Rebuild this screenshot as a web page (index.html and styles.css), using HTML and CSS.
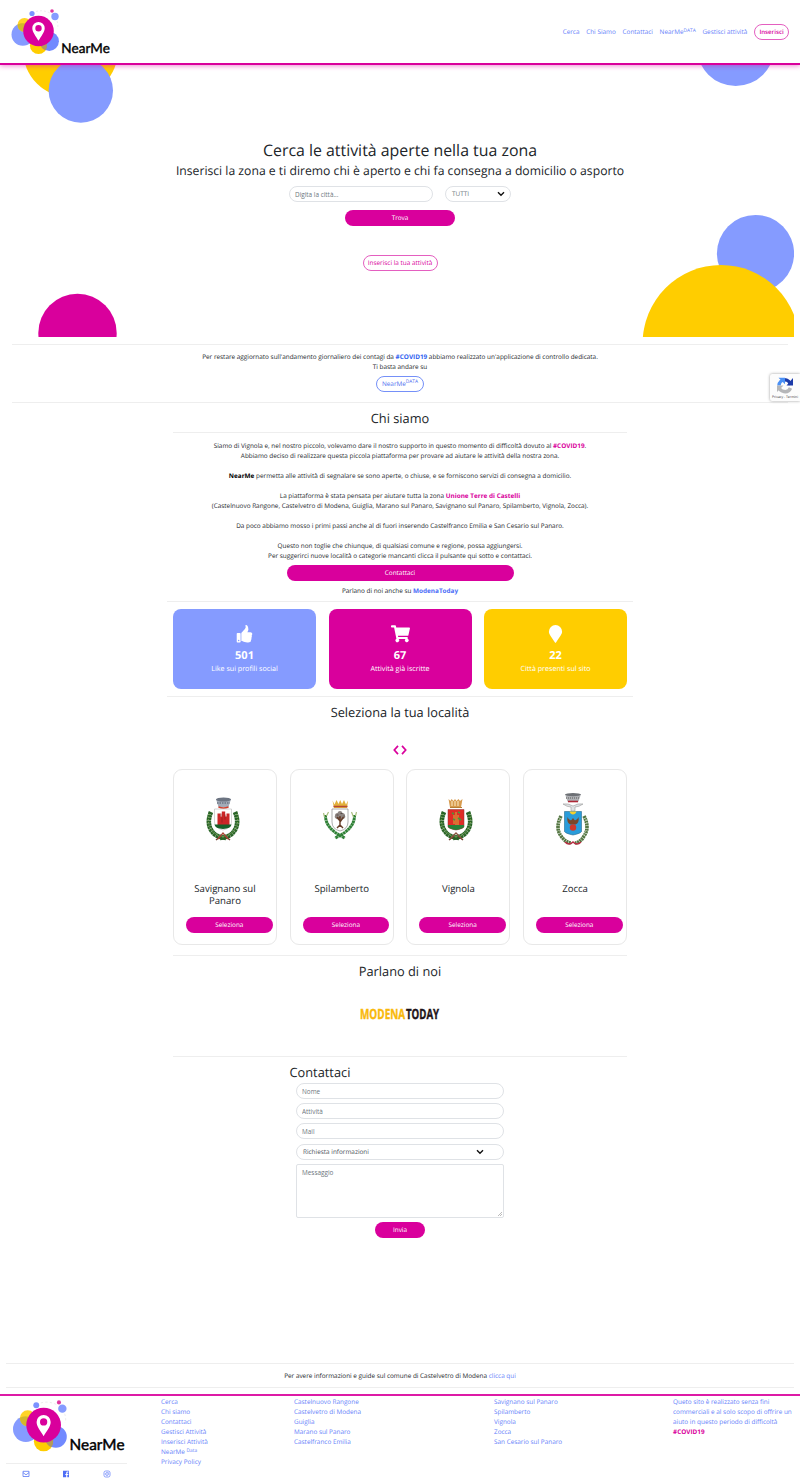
FILE: index.html
```html
<!DOCTYPE html>
<html lang="it">
<head>
<meta charset="utf-8">
<title>NearMe</title>
<link rel="stylesheet" href="styles.css">
</head>
<body>
<svg class="defs" width="0" height="0">
  <symbol id="logo" viewBox="8 8 108 52">
    <path d="M36 11.500q7-2 14 1.500M57 21q1.500 4 .5 8" fill="none" stroke="#ddd" stroke-width=".5" stroke-dasharray="2 2"/>
    <circle cx="22.800" cy="34.500" r="11.300" fill="#859bff"/>
    <circle cx="24.500" cy="25" r="7" fill="#ffcd00" fill-opacity=".85"/>
    <path d="M17.800 24.500a11.300 11.300 0 0 1 10 .2v6.400a7 7 0 0 1-10-6.600z" fill="#c9b12e" fill-opacity=".75"/>
    <circle cx="38.500" cy="45.500" r="8.600" fill="#ffcd00"/>
    <circle cx="49.300" cy="41.300" r="9.600" fill="#7189ff"/>
    <path d="M41 37h5.800v10.500a8.600 8.600 0 0 1-1.500 3a9.600 9.600 0 0 1-4.300-13.500z" fill="#b39a59"/>
    <circle cx="38.500" cy="31" r="15.300" fill="#d9009c"/>
    <circle cx="32" cy="13.500" r="2.600" fill="#7b92ff"/>
    <circle cx="55" cy="16.500" r="3.700" fill="#859bff"/>
    <circle cx="52" cy="11" r="1.800" fill="#e0379f"/>
    <path fill-rule="evenodd" d="M38.500 22a6.200 6.200 0 0 1 6.200 6.200c0 4-3.700 8-6.200 12.600c-2.500-4.600-6.200-8.600-6.200-12.600a6.200 6.200 0 0 1 6.200-6.200zm0 3a3.200 3.200 0 1 0 0 6.400a3.200 3.200 0 0 0 0-6.400z" fill="#fff"/>
    <text x="61.300" y="53" class="logo-text" textLength="48.500" lengthAdjust="spacing">NearMe</text>
  </symbol>
  <symbol id="wreath" viewBox="0 0 34 42">
    <path d="M5 13Q0 25 6.500 33Q10 38 20 39M29 13Q34 25 27.500 33Q24 38 14 39" fill="none" stroke="#286326" stroke-width="4.600" stroke-dasharray="2.600 .3"/>
    <path d="M3.500 15Q0 25 7 33Q11 37 18 38M30.500 15Q34 25 27 33Q23 37 16 38" fill="none" stroke="#76a34f" stroke-width="1.300" stroke-dasharray="1 1.700"/>
    <path d="M10 41l5-4M24 41l-5-4" stroke="#70402e" stroke-width="1.500"/>
  </symbol>
</svg>

<header class="topbar">
  <svg class="topbar-logo"><use href="#logo"/></svg>
  <nav class="nav">
    <a>Cerca</a><a>Chi Siamo</a><a>Contattaci</a><a>NearMe<sup>DATA</sup></a><a>Gestisci attività</a>
    <a class="btn-outline nav-btn">Inserisci</a>
  </nav>
</header>

<section class="hero">
  <svg class="hero-bg" viewBox="0 65 794 272">
    <circle cx="70.500" cy="50" r="47.500" fill="#ffcd00"/>
    <circle cx="80.800" cy="90.500" r="32.200" fill="#859bff"/>
    <circle cx="735.700" cy="47.300" r="38.700" fill="#859bff"/>
    <circle cx="755.500" cy="253.500" r="38.600" fill="#859bff"/>
    <circle cx="721" cy="343.500" r="78.400" fill="#ffcd00"/>
    <circle cx="77.500" cy="333" r="39.200" fill="#d9009c"/>
  </svg>
  <h1>Cerca le attività aperte nella tua zona</h1>
  <h2>Inserisci la zona e ti diremo chi è aperto e chi fa consegna a domicilio o asporto</h2>
  <div class="search">
    <input class="field city" placeholder="Digita la città...">
    <div class="field category"><span>TUTTI</span><svg class="chev" viewBox="0 0 8 6"><path d="M1 1.300l3 3l3-3"/></svg></div>
  </div>
  <a class="btn trova">Trova</a>
  <a class="btn-outline add">Inserisci la tua attività</a>
</section>

<section class="data">
  <p>Per restare aggiornato sull'andamento giornaliero dei contagi da <b class="blue">#COVID19</b> abbiamo realizzato un'applicazione di controllo dedicata.</p>
  <p>Ti basta andare su</p>
  <a class="btn-outline btn-blue">NearMe<sup>DATA</sup></a>
</section>

<main>
  <section class="about">
    <h3>Chi siamo</h3>
    <div class="about-text">
      <p>Siamo di Vignola e, nel nostro piccolo, volevamo dare il nostro supporto in questo momento di difficoltà dovuto al <b class="pink">#COVID19</b>.</p>
      <p>Abbiamo deciso di realizzare questa piccola piattaforma per provare ad aiutare le attività della nostra zona.</p>
      <br>
      <p><b class="black">NearMe</b> permetta alle attività di segnalare se sono aperte, o chiuse, e se forniscono servizi di consegna a domicilio.</p>
      <br>
      <p>La piattaforma è stata pensata per aiutare tutta la zona <b class="pink">Unione Terre di Castelli</b></p>
      <p>(Castelnuovo Rangone, Castelvetro di Modena, Guiglia, Marano sul Panaro, Savignano sul Panaro, Spilamberto, Vignola, Zocca).</p>
      <br>
      <p>Da poco abbiamo mosso i primi passi anche al di fuori inserendo Castelfranco Emilia e San Cesario sul Panaro.</p>
      <br>
      <p>Questo non toglie che chiunque, di qualsiasi comune e regione, possa aggiungersi.</p>
      <p>Per suggerirci nuove località o categorie mancanti clicca il pulsante qui sotto e contattaci.</p>
    </div>
    <a class="btn contact-btn">Contattaci</a>
    <p class="press">Parlano di noi anche su <b class="blue2">ModenaToday</b></p>
  </section>

  <section class="stats">
    <div class="stat s-blue">
      <svg viewBox="0 -64 512 576"><path fill-rule="evenodd" d="M104 200H24c-13 0-24 11-24 24v264c0 13 11 24 24 24h80c13 0 24-11 24-24V224c0-13-11-24-24-24zM64 472a24 24 0 1 1 0-48a24 24 0 0 1 0 48zM384 81.500c0 42.400-26 66.200-33.300 94.500h101.700c33.400 0 59.400 27.700 59.600 58.100c.1 18-7.600 37.300-19.500 49.300c9.800 23.400 8.200 56.200-9.400 79.700c8.700 25.900-.1 57.700-16.400 74.800c4.300 17.600 2.200 32.600-6.100 44.600C440.200 511.600 389.600 512 346.800 512c-60.300 0-109.600-22-149.200-39.600c-19.900-8.900-25.900-9.800-45.700-10.200V203c0-4 1.600-7.900 4.500-10.700c49.500-48.900 70.800-80.700 111.300-121.300c18.500-18.500 25.200-46.500 31.700-73.600C270.200-25.700 281.700-64 306.600-64c38 0 72 32.700 77.400 145.500z"/></svg>
      <strong>501</strong><span>Like sui profili social</span>
    </div>
    <div class="stat s-pink">
      <svg viewBox="0 0 576 512"><path d="M528 301l47-208c4-15-8-29-23-29H159l-9-45C148 8 138 0 126 0H24C11 0 0 11 0 24v16c0 13 11 24 24 24h70l70 343a56 56 0 1 0 67 9h210a56 56 0 1 0 63-10l6-25c3-15-8-29-24-29H218l-7-32h294c11 0 21-8 23-19z"/></svg>
      <strong>67</strong><span>Attività già iscritte</span>
    </div>
    <div class="stat s-yellow">
      <svg viewBox="0 0 384 512"><path d="M172 502C27 291 0 270 0 192a192 192 0 0 1 384 0c0 78-27 99-172 310a24 24 0 0 1-40 0z"/></svg>
      <strong>22</strong><span>Città presenti sul sito</span>
    </div>
  </section>

  <section class="places">
    <h3>Seleziona la tua località</h3>
    <svg class="arrows" viewBox="0 0 14 10"><path d="M5 .9L1.300 5L5 9.100M9 .9L12.700 5L9 9.100"/></svg>
    <div class="cards">
      <div class="card">
        <svg class="crest" viewBox="0 0 34 56">
          <use href="#wreath" y="8" width="34" height="42"/>
          <path d="M10 8h15l-2.500 8h-10z" fill="#a3abb8"/><ellipse cx="17.500" cy="8.500" rx="7.500" ry="2" fill="#6c7482"/><path d="M11 12h13" stroke="#6e7784" stroke-width="1.500" stroke-dasharray="1.500 1"/><path d="M12.500 16q5 2 10 0" stroke="#d03f2d" stroke-width="1.600" fill="none"/>
          <path d="M8.500 18h17v13q0 6-8.500 8q-8.500-2-8.500-8z" fill="#fff" stroke="#aaa" stroke-width=".5"/>
          <path d="M11.500 22.500h3v3h1.300v-5h3.400v5h1.300v-3h3V34h-12z" fill="#cb2527"/><path d="M15 22.500v3m4-2v5m-3-2v5" stroke="#892020" stroke-width=".7"/><path d="M8.500 33.500h17q-.5 4-8.500 4.500q-8-.5-8.500-4.500z" fill="#17602a"/><path d="M12 48l5-6l5 6" stroke="#a64532" fill="none" stroke-width="1.300"/>
        </svg>
        <h4>Savignano sul<br>Panaro</h4><a class="btn">Seleziona</a>
      </div>
      <div class="card">
        <svg class="crest" viewBox="0 0 34 56">
          <path d="M2.500 24Q2 38 22 47M31.500 24Q32 38 12 47" fill="none" stroke="#2f8136" stroke-width="3" stroke-dasharray="2.500 .4"/><path d="M1.500 26l-1-4M3.500 25l2-4M32.500 25l1-4M30.500 26l-2-5" stroke="#a8bd7d" stroke-width="1.200"/>
          <path d="M9.500 9.500l2 4l2-4.500l2 4l1.700-4l1.800 4l2-4l2 4.500l2-4l-1 7.500h-13z" fill="#e2b13b"/><path d="M10.500 15.500h14" stroke="#b84833" stroke-width="1.500"/>
          <path d="M9 18h16v13q0 7-8 9q-8-2-8-9z" fill="#fff" stroke="#8a8a8a" stroke-width=".7"/>
          <path d="M17 20q2 0 2.500 2q2.500 0 2.500 2.500q1 2-1.500 3.500q-3 1.500-7 0q-2.500-1.500-1.500-3.500q0-2.500 2.500-2.500q.5-2 2.500-2z" fill="#8d8582"/><path d="M13.500 24h2m2-1.500h2m1 2.500h1m-6 1.500h2" stroke="#564a47" stroke-width="1"/><path d="M17 25v11m0-5l3.500-5m-3.500 4l-3-4M14 37l3-3l3 3" fill="none" stroke="#653c28" stroke-width="1.400"/>
        </svg>
        <h4>Spilamberto</h4><a class="btn">Seleziona</a>
      </div>
      <div class="card">
        <svg class="crest" viewBox="0 0 34 56">
          <use href="#wreath" y="8" width="34" height="42"/>
          <path d="M9.500 8l2 2l1-2l2 2l1.500-2l1.500 2l2-2l1.500 2l2.500-2l-1.500 8.500h-11z" fill="#d79b4e"/><path d="M13 10v5m3-5v5m3-5v5" stroke="#fff1ca" stroke-width="1"/><path d="M11 16.500h12" stroke="#b57e34" stroke-width="1"/>
          <path d="M9 18.500h16v17q0 2-8 3.500q-8-1.500-8-3.500z" fill="#df2c27" stroke="#873434" stroke-width=".5"/>
          <path d="M17 21v15m-2-12v9m4-9v10" stroke="#d3b33f" stroke-width="1" fill="none"/><path d="M13 22l2 1m4-2l2 1m-7 6l2 1m3-2l3 2" stroke="#4a9a38" stroke-width="1.600"/><path d="M9 34h16v2q-2 2-8 3q-6-1-8-3z" fill="#278139"/><path d="M11 48l6-6l6 6" stroke="#88523d" fill="none" stroke-width="1.300"/>
        </svg>
        <h4>Vignola</h4><a class="btn">Seleziona</a>
      </div>
      <div class="card">
        <svg class="crest" viewBox="0 0 34 56">
          <path d="M5 25Q-1 37 5 45Q9 51 15 52M28 25Q34 37 28 45Q25 51 19 52" fill="none" stroke="#547643" stroke-width="3.600" stroke-dasharray="2.100 .5"/><path d="M4 28Q1 37 6 44M30 28Q32 37 28 44" fill="none" stroke="#bed0a6" stroke-width="1" stroke-dasharray="1 2"/>
          <path d="M9 3h16l-2.500 7.500h-11z" fill="#aeb0b4"/><ellipse cx="17" cy="3.600" rx="7.800" ry="1.600" fill="#6d7075"/><path d="M10 7h14" stroke="#777" stroke-width="1.500" stroke-dasharray="1 1"/><path d="M12 10.500h10" stroke="#ad2735" stroke-width="1.600"/>
          <path d="M7 13q5-1 10 2q5-3 10-2q-4 3-8 3v4h-4v-4q-4 0-8-3z" fill="#dfe2e4" stroke="#888" stroke-width=".5"/>
          <path d="M8.500 20.500h17v20q-1 2-8.500 3.500q-7.500-1.500-8.500-3.500z" fill="#299cda" stroke="#28698e" stroke-width=".6"/><path d="M13.500 20.500h7q-1 3-3.500 3t-3.500-3z" fill="#f4cf2c"/>
          <path d="M11.500 26q1.500 4 4 3l1.500-2l1.500 2q2.500 1 4-3q1 6-3 7.500h-5q-4-1.500-3-7.500z" fill="#79472a"/><circle cx="17" cy="36.500" r="3.200" fill="#cd392c"/><path d="M9 51q4 4 8 0q4 4 8 0" fill="none" stroke="#b62d42" stroke-width="1.500"/>
        </svg>
        <h4>Zocca</h4><a class="btn">Seleziona</a>
      </div>
    </div>
  </section>

  <section class="talk">
    <h3>Parlano di noi</h3>
    <div class="modena"><span class="m1">MODENA</span><span class="m2">TODAY</span></div>
  </section>

  <form class="contact">
    <h3>Contattaci</h3>
    <input class="field" placeholder="Nome">
    <input class="field" placeholder="Attività">
    <input class="field" placeholder="Mail">
    <div class="field topic"><span>Richiesta informazioni</span><svg class="chev" viewBox="0 0 8 6"><path d="M1 1.300l3 3l3-3"/></svg></div>
    <textarea placeholder="Messaggio"></textarea>
    <a class="btn send">Invia</a>
  </form>
</main>

<p class="guide">Per avere informazioni e guide sul comune di Castelvetro di Modena <a>clicca qui</a></p>

<footer>
  <div class="brand">
    <svg class="foot-logo"><use href="#logo"/></svg>
    <div class="social">
      <svg viewBox="0 0 8 8"><path d="M1 1.300h6v5.200H1zM1 2.600l3 2.200l3-2.200" fill="none" stroke="#5b78f5" stroke-width=".8"/></svg>
      <svg viewBox="0 0 8 8"><path d="M1 .8h6v6.400H5.300V5h1V3.900h-1V3q0-.5.5-.5h.6V1.600h-.9q-1.300 0-1.300 1.300v1H3.300V5h.9v2.200H1z" fill="#4f6ef5"/></svg>
      <svg viewBox="0 0 8 8"><rect x="1" y="1" width="6" height="6" rx="1.700" fill="none" stroke="#6f88fa" stroke-width=".8"/><circle cx="4" cy="4" r="1.400" fill="none" stroke="#6f88fa" stroke-width=".8"/><circle cx="5.600" cy="2.400" r=".4" fill="#6f88fa"/></svg>
    </div>
  </div>
  <ul><li>Cerca</li><li>Chi siamo</li><li>Contattaci</li><li>Gestisci Attività</li><li>Inserisci Attività</li><li>NearMe <sup>Data</sup></li><li>Privacy Policy</li></ul>
  <ul><li>Castelnuovo Rangone</li><li>Castelvetro di Modena</li><li>Guiglia</li><li>Marano sul Panaro</li><li>Castelfranco Emilia</li></ul>
  <ul><li>Savignano sul Panaro</li><li>Spilamberto</li><li>Vignola</li><li>Zocca</li><li>San Cesario sul Panaro</li></ul>
  <ul><li>Queto sito è realizzato senza fini</li><li>commerciali e al solo scopo di offrire un</li><li>aiuto in questo periodo di difficoltà</li><li><b class="pink">#COVID19</b></li></ul>
</footer>

<aside class="captcha">
  <svg viewBox="0 0 18 17"><path d="M3 8.500A6 6 0 0 1 9 2.800" fill="none" stroke="#4a90f5" stroke-width="3.500"/><path d="M9 2.800A6 6 0 0 1 14.500 8" fill="none" stroke="#1c3aa9" stroke-width="3.500"/><path d="M14.500 11A6 6 0 0 1 3 9" fill="none" stroke="#b5b6b8" stroke-width="3.500"/><path d="M17 1v7.500H10.500z" fill="#1c3aa9"/><path d="M1 8.500h6.500L1 15z" fill="#b5b6b8"/><path d="M2.500.8H9v6.500z" fill="#4a90f5"/></svg>
  <span>Privacy - Termini</span>
</aside>
</body>
</html>
```
FILE: styles.css
```css
* { box-sizing: border-box; }
body {
  margin: 0;
  width: 800px;
  height: 1481px;
  overflow: hidden;
  position: relative;
  background: #fff;
  color: #212529;
  font: 6.4px/10.08px "Open Sans", "Noto Sans", sans-serif;
  text-rendering: geometricPrecision;
}
.defs { position: absolute; }
h1, h2, h3, h4, p, ul { margin: 0; padding: 0; font-weight: 400; }
li { list-style: none; }
svg { display: block; }
sup { font-size: 75%; line-height: 0; position: relative; top: -.5em; vertical-align: baseline; }
.pink { color: #d9009c; }
.blue { color: #2f5ff0; }
.blue2 { color: #4a6cf7; }
.black { color: #000; }
.logo-text { font: 400 13.500px Lato, sans-serif; fill: #000; stroke: #000; stroke-width: .4; }

.btn, .btn-outline {
  display: block;
  height: 16px;
  line-height: 16px;
  border-radius: 8px;
  text-align: center;
  background: #d9009c;
  color: #fff;
}
.btn-outline {
  border: 1px solid #e45fc0;
  line-height: 14.500px;
  background: #fff;
  color: #d9009c;
}
.field {
  display: block;
  height: 16px;
  padding: 0 5px;
  border: 1px solid #dfe2e6;
  border-radius: 8px;
  background: #fff;
  color: #6c757d;
  font: inherit;
  line-height: 14px;
}
::placeholder { color: #6c757d; opacity: 1; }
.chev { width: 8px; height: 6px; fill: none; stroke: #111; stroke-width: 1.400; }

.topbar {
  position: relative;
  z-index: 2;
  display: flex;
  align-items: flex-start;
  justify-content: space-between;
  height: 65px;
  padding: 8px 11px 0 8px;
  background: #fff;
  border-bottom: 2px solid #d9009c;
  box-shadow: 0 1px 5px rgba(217, 0, 156, .45);
}
.topbar-logo { width: 108px; height: 52px; }
.nav { display: flex; align-items: center; gap: 6.700px; margin-top: 16px; color: #6580fa; }
.nav-btn { width: 35px; font-size: 6.1px; font-weight: 600; white-space: nowrap; }

.hero { position: relative; height: 272px; padding-top: 73px; text-align: center; }
.hero-bg { position: absolute; left: 0; top: 0; width: 794px; height: 272px; z-index: -1; }
h1 { font-size: 15.900px; line-height: 24px; }
h2 { font-size: 12.200px; line-height: 17px; }
.search { display: flex; justify-content: center; gap: 12px; margin-top: 7px; }
.city { width: 144px; }
.category { display: flex; align-items: center; justify-content: space-between; width: 66px; padding: 0 5px 0 6px; }
.trova { width: 110px; margin: 8px auto 0; }
.add { width: 75px; margin: 29px auto 0; white-space: nowrap; }

.data { margin: 7px 12px 0; height: 59px; padding-top: 6.500px; border-top: 1px solid #eee; border-bottom: 1px solid #eee; text-align: center; }
.btn-blue { width: 48px; margin: 4px auto 0; border-color: #7590f8; color: #4f70f0; }

main { width: 454px; margin: 0 0 0 173px; }
h3 { font-size: 12.800px; line-height: 20px; text-align: center; }
.about { margin: 0 -6px; padding-top: 5px; height: 199px; border-bottom: 1px solid #eee; text-align: center; }
.about-text { margin: 4px 6px 0; padding-top: 7.500px; border-top: 1px solid #eee; }
.contact-btn { width: 227px; margin: 3.200px auto 5px; }

.stats { display: grid; grid-template-columns: repeat(3, 143px); column-gap: 12.500px; margin: 0 -6px; padding: 7px 6px; height: 95px; border-bottom: 1px solid #eee; }
.stat { display: flex; flex-direction: column; align-items: center; height: 80px; padding-top: 16px; border-radius: 8px; color: #fff; }
.stat svg { width: 19px; height: 17.500px; fill: #fff; }
.stat strong { margin-top: 5.500px; font-size: 11px; line-height: 16px; }
.stat span { font-size: 7.150px; line-height: 11px; }
.s-blue { background: #859bff; }
.s-pink { background: #d9009c; }
.s-yellow { background: #ffcd00; }

.places { padding-top: 5px; height: 258px; }
.arrows { width: 14px; height: 10px; margin: 23px auto 14px; fill: none; stroke: #d9009c; stroke-width: 1.700; }
.cards { display: grid; grid-template-columns: repeat(4, 104px); column-gap: 12.700px; }
.card { display: grid; grid-template-rows: 112.500px 34px 16px; height: 176px; border: 1px solid #e8e8e8; border-radius: 9px; text-align: center; }
.crest { width: 34px; height: 56px; margin: 21px 0 0 32px; }
.card h4 { font-size: 9.600px; line-height: 12px; }
.card .btn { width: 86.500px; margin-left: 12px; }

.talk { height: 102px; padding-top: 5px; border-top: 1px solid #eee; border-bottom: 1px solid #eee; }
.modena { display: flex; justify-content: center; height: 18px; margin: 25px 0 0; font: 700 14px/18px "Open Sans", sans-serif; }
.m1, .m2 { flex: none; white-space: nowrap; -webkit-text-stroke: .4px; }
.m1 { width: 45.500px; color: #f9b90c; transform: scaleX(.71); transform-origin: 0 50%; }
.m2 { width: 34.500px; color: #1e1418; transform: scaleX(.69); transform-origin: 0 50%; }

.contact { width: 221px; height: 306px; margin-left: 117px; padding: 5px 7px 0 6px; }
.contact h3 { margin-left: -6.500px; text-align: left; }
.contact .field { width: 208px; margin: 0 0 4.200px; }
.contact h3 + .field { margin-top: 1px; }
.contact .topic { display: flex; align-items: center; justify-content: space-between; padding: 0 19px 0 6px; color: #495057; }
textarea {
  display: block;
  width: 208px;
  height: 54px;
  padding: 3px 5px;
  border: 1px solid #dfe2e6;
  border-radius: 2px;
  font: inherit;
  resize: none;
  background: linear-gradient(135deg, transparent 50%, #bbb 50%, #bbb 62%, transparent 62%, transparent 75%, #bbb 75%, #bbb 87%, transparent 87%) no-repeat right 1px bottom 1px / 4px 4px;
}
.send { width: 50px; margin: 4px auto 0; }

.guide { margin: 0 6px; height: 25px; padding-top: 7px; border-top: 1px solid #eee; border-bottom: 1px solid #eee; text-align: center; }
.guide a { color: #6580fa; }
footer { display: grid; grid-template-columns: 161px 133px 200px 179px 127px; height: 87px; margin-top: 6px; border-top: 2px solid #dd1aa6; color: #6580fa; }
footer ul { padding-top: .5px; white-space: nowrap; }
.brand { padding-left: 6px; }
.foot-logo { width: 122.600px; height: 59px; margin: 3px 0 0 2.500px; }
.social { display: flex; justify-content: space-around; width: 121px; margin-top: 4.500px; padding-top: 6px; border-top: 1px solid #eee; }
.social svg { width: 8px; height: 8px; }

.captcha { position: absolute; right: 0; top: 374px; width: 30px; height: 27px; padding-top: 3px; border-radius: 2px 0 0 2px; background: #fcfcfc; box-shadow: 0 0 3px #999; overflow: hidden; }
.captcha svg { width: 18px; height: 17px; margin-left: 6px; }
.captcha span { display: block; font-size: 3.400px; line-height: 5px; text-align: center; white-space: nowrap; color: #333; }
```
